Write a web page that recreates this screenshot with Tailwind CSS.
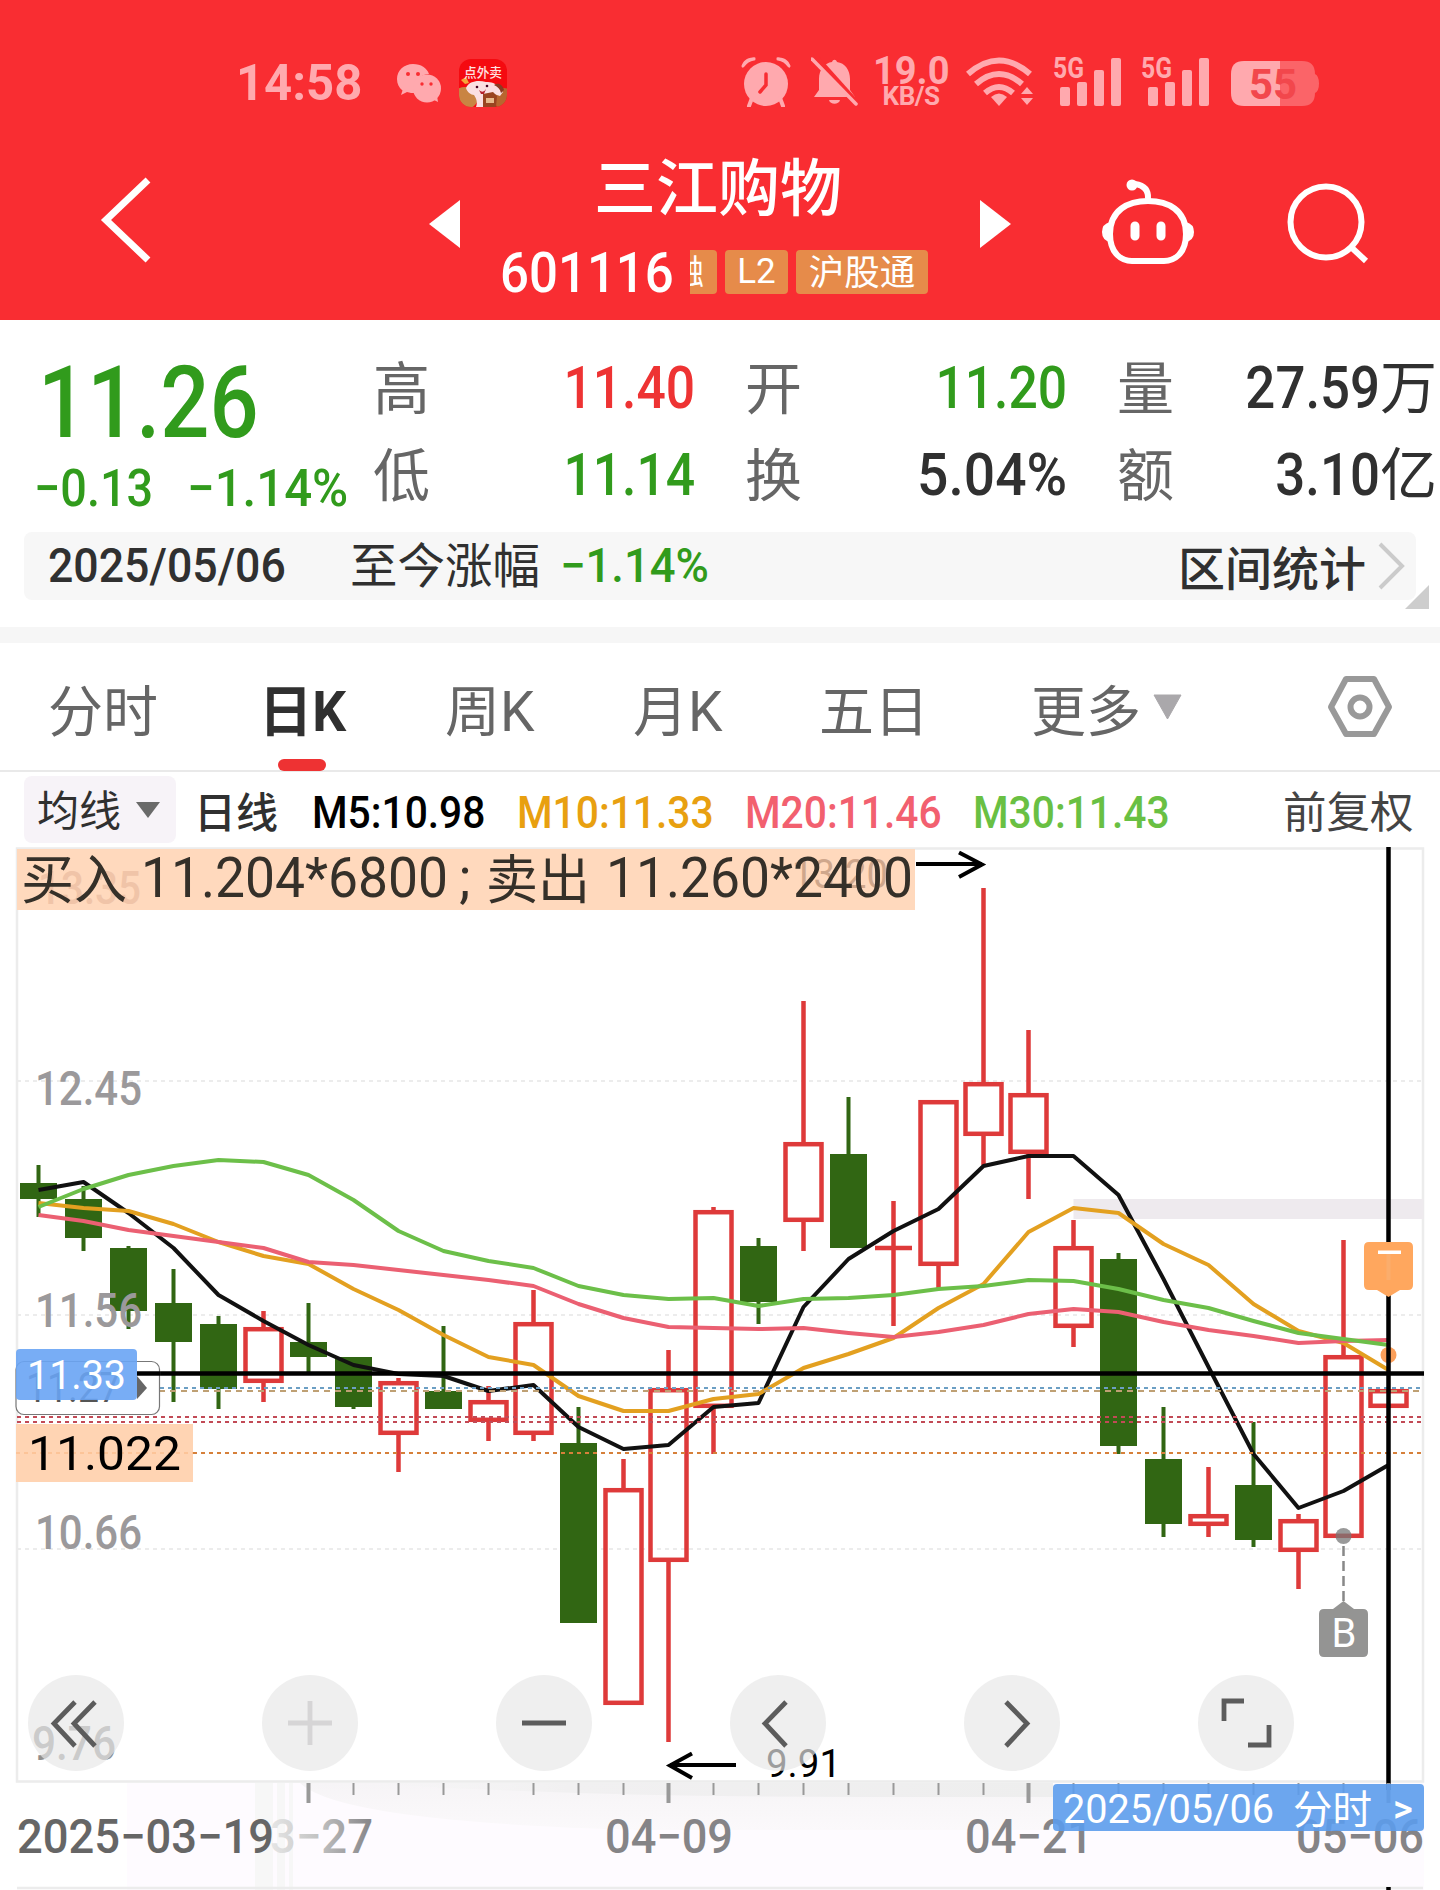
<!DOCTYPE html>
<html lang="zh-CN">
<head>
<meta charset="utf-8">
<title>三江购物 601116</title>
<script src="https://cdn.jsdelivr.net/npm/@tailwindcss/browser@4"></script>
</head>
<body class="w-[1440px] h-[1890px] overflow-hidden bg-white font-['Roboto','Noto_Sans_CJK_SC',sans-serif] text-[#303030]">

<!-- Header -->
<header class="h-[320px] bg-[#f92d32] text-white">
  <!-- System status bar -->
  <div class="flex h-[130px] items-start pt-[57px] text-[#ffa9ae]">
    <div class="ml-[236px] w-[161px] h-[50px] leading-[53px] text-[50px] font-bold whitespace-nowrap"><span class="inline-block origin-left scale-x-[0.98]">14:58</span></div>
    <svg class="w-[46px] h-[50px]" viewBox="397 57 46 50">
      <path fill="currentColor" d="M413 64c-9 0-16 6.500-16 15 0 5 2 8.500 5.500 11.500L401 95l6-3c3 1 5 1 8 1-1-13 6-19 14-19-2-6-8-10-16-10z"/>
      <circle cx="427" cy="88.500" r="14" fill="currentColor"/><path fill="currentColor" d="M432 99l6 3-1-6z"/>
      <g fill="#f92d32"><circle cx="408" cy="74" r="2"/><circle cx="418" cy="74" r="2"/><circle cx="422" cy="84" r="1.700"/><circle cx="431" cy="84" r="1.700"/></g>
    </svg>
    <svg class="ml-[16px] w-[48px] h-[50px]" viewBox="0 0 48 50">
      <defs><clipPath id="app"><rect y="2" width="48" height="48" rx="12"/></clipPath></defs>
      <g clip-path="url(#app)">
        <rect width="48" height="50" fill="#f50a10"/>
        <ellipse cx="6" cy="41" rx="13" ry="11" fill="#c98443"/><ellipse cx="45" cy="42" rx="10" ry="11" fill="#b8662f"/>
        <path d="M2 23l5-3 3 6-4 1z" fill="#f6a53a"/>
        <path d="M7 31c3-7 12-8 20-6 5 0 10 1 12 5l5 5-3 4-6-2c1 4-1 7-3 13H17c2-5 0-9-2-12-3 0-7-3-8-7z" fill="#fbdfe2"/>
        <path d="M35 28c4-3 9 0 10 5l-3 3c-1-4-3-6-7-8z" fill="#8a3a22"/>
        <circle cx="18" cy="30" r="1.300" fill="#402"/><circle cx="28" cy="29" r="1.300" fill="#402"/><path d="M20 33q4 4 7-1l-2 5h-3z" fill="#b5202a"/>
        <path d="M24 37l10-2 4 4-1 11H24z" fill="#9a4420"/><rect x="27" y="41" width="8" height="5" fill="#e7b98b"/>
        <text x="5" y="20" font-size="13" font-weight="500" fill="#ffe3e3" textLength="38" lengthAdjust="spacingAndGlyphs" font-family="Noto Sans CJK SC">点外卖</text>
      </g>
    </svg>
    <svg class="ml-[234px] w-[50px] h-[50px]" viewBox="0 0 50 50" fill="currentColor">
      <circle cx="25" cy="27" r="22"/><path d="M1 11C0 4 8-1 15 1 9 3 4 6 1 11zM49 11C50 4 42-1 35 1c6 2 11 5 14 10z"/><path d="M2 9Q6 3 13 2M48 9Q44 3 37 2" fill="none" stroke="currentColor" stroke-width="3" stroke-linecap="round"/>
      <path d="M11 41l-3 8M39 41l3 8" stroke="currentColor" stroke-width="4" stroke-linecap="round"/>
      <path d="M25 17v11l-6 7" stroke="#f92d32" stroke-width="3.500" stroke-linecap="round" fill="none"/>
    </svg>
    <svg class="ml-[20px] w-[48px] h-[50px]" viewBox="0 0 48 50" fill="currentColor">
      <path d="M3 40l5-7V22C8 12 14 6 21 5c1-3 4-3 5 0 8 1 13 8 13 17v11l5 7z"/><path d="M18 43h11c-1 5-10 5-11 0z"/>
      <path d="M5 0L49 49" stroke="#f92d32" stroke-width="5"/><path d="M1 2l44 45" stroke="currentColor" stroke-width="3.500" stroke-linecap="round"/>
    </svg>
    <div class="ml-[14px] w-[76px] text-center font-bold">
      <div class="h-[27px] text-[38px] leading-[28px]">19.0</div>
      <div class="text-[26px] leading-[24px] tracking-[-0.5px]">KB/S</div>
    </div>
    <svg class="ml-[16px] w-[70px] h-[50px]" viewBox="965 57 70 50" fill="none" stroke="currentColor" stroke-width="6">
      <path d="M968 74q31-27 62 0M976 84q23-20 46 0M985 93q14-12 28 0"/>
      <path d="M999 106l-8-9q8-7 16 0z" fill="currentColor" stroke="none"/>
      <path d="M1027 87l6 7h-12zM1027 105l6-7h-12z" fill="currentColor" stroke="none"/>
    </svg>
    <svg class="ml-[18px] w-[70px] h-[50px] overflow-visible" viewBox="1053 57 70 50" fill="currentColor">
      <text x="1053" y="78" font-size="29" font-weight="700" textLength="31" lengthAdjust="spacingAndGlyphs">5G</text>
      <rect x="1060" y="87" width="10" height="19" rx="2"/><rect x="1077" y="82" width="10" height="24" rx="2"/><rect x="1094" y="70" width="10" height="36" rx="2"/><rect x="1111" y="58" width="10" height="48" rx="2"/>
    </svg>
    <svg class="ml-[18px] w-[70px] h-[50px] overflow-visible" viewBox="1053 57 70 50" fill="currentColor">
      <text x="1053" y="78" font-size="29" font-weight="700" textLength="31" lengthAdjust="spacingAndGlyphs">5G</text>
      <rect x="1060" y="87" width="10" height="19" rx="2"/><rect x="1077" y="82" width="10" height="24" rx="2"/><rect x="1094" y="70" width="10" height="36" rx="2"/><rect x="1111" y="58" width="10" height="48" rx="2"/>
    </svg>
    <svg class="ml-[20px] w-[90px] h-[50px]" viewBox="1231 57 90 50">
      <path d="M1280 61h22q13 0 13 13 4 2 4 9.500t-4 9.500q0 13-13 13h-22z" fill="#fb6468"/>
      <path d="M1280 61h-36q-13 0-13 13v19q0 13 13 13h36z" fill="currentColor"/>
      <text x="1249" y="99" font-size="42" font-weight="700" fill="#f2474c" textLength="48" lengthAdjust="spacingAndGlyphs">55</text>
    </svg>
  </div>
  <!-- Navigation -->
  <div class="flex h-[190px] items-start">
    <svg class="ml-[96px] mt-[40px] w-[60px] h-[100px]" viewBox="96 170 60 100" fill="none" stroke="white" stroke-width="7"><path d="M148 180l-42 40 42 40"/></svg>
    <svg class="ml-[273px] mt-[68px] w-[32px] h-[52px]" viewBox="0 0 32 52" fill="white"><path d="M0 26L31 2v48z"/></svg>
    <div class="ml-[34px] w-[445px]">
      <div class="mt-[20px] ml-[99px] h-[76px] leading-[79px] text-[62px] font-medium whitespace-nowrap">三江购物</div>
      <div class="flex h-[50px] items-center mt-[21px]">
        <div class="w-[195px] pl-[5px] pt-[2px] text-[56px] leading-[50px] font-medium whitespace-nowrap"><span class="inline-block origin-left scale-x-[0.91]">601116</span></div>
        <div class="flex h-[44px] w-[27px] justify-end overflow-hidden rounded-r-[4px] bg-[#e68b4a] pr-[13px] text-[34px] leading-[44px]"><span>融</span></div>
        <div class="ml-[8px] h-[44px] w-[63px] rounded-[4px] bg-[#e68b4a] text-center text-[35px] leading-[44px]">L2</div>
        <div class="ml-[8px] h-[44px] w-[132px] rounded-[4px] bg-[#e68b4a] text-center text-[35.500px] leading-[47px]">沪股通</div>
      </div>
    </div>
    <svg class="ml-[40px] mt-[68px] w-[32px] h-[52px]" viewBox="0 0 32 52" fill="white"><path d="M31 26L0 2v48z"/></svg>
    <svg class="ml-[86px] mt-[46px] w-[100px] h-[92px]" viewBox="1098 176 100 92" fill="none" stroke="white" stroke-width="6">
      <path d="M1148 201c20 0 38 9 38 33 0 20-12 27-22 27h-32c-10 0-22-7-22-27 0-24 18-33 38-33z"/>
      <path d="M1148 199q1-13-13-15"/><circle cx="1132" cy="185" r="5.500" fill="white" stroke="none"/>
      <path d="M1110 222q-8 2-8 10t8 10zM1186 222q8 2 8 10t-8 10z" fill="white" stroke="none"/>
      <path d="M1135 226v10M1161 226v10" stroke-width="9" stroke-linecap="round"/>
    </svg>
    <svg class="ml-[84px] mt-[48px] w-[92px] h-[92px]" viewBox="1282 178 92 92" fill="none" stroke="white" stroke-width="6"><circle cx="1326" cy="222" r="35.500"/><path d="M1351 247l15 14"/></svg>
  </div>
</header>

<!-- Quote summary -->
<section class="h-[307px]">
  <div class="flex h-[212px] whitespace-nowrap">
    <div class="w-[373px] pt-[20px] text-[#319b1c]">
      <div class="h-[120px] pl-[38px] text-[100px] leading-[125px] font-medium"><span class="inline-block origin-left scale-x-[0.865]">11.26</span></div>
      <div class="flex h-[54px] text-[52px] leading-[57px] font-medium">
        <div class="ml-[34px] w-[153px]"><span class="inline-block origin-left scale-x-[0.9]">−0.13</span></div>
        <div><span class="inline-block origin-left scale-x-[0.945]">−1.14%</span></div>
      </div>
    </div>
    <div class="grid grid-cols-[322px_322px_320px] grid-rows-[87px_87px] gap-x-[50px] pt-[24px] text-[60px] leading-[87px] font-medium">
      <div class="flex justify-between"><span class="pt-[2px] text-[57px] font-normal text-[#666]">高</span><span class="origin-right scale-x-[0.86] text-[#e33]">11.40</span></div>
      <div class="flex justify-between"><span class="pt-[2px] text-[57px] font-normal text-[#666]">开</span><span class="origin-right scale-x-[0.86] text-[#319b1c]">11.20</span></div>
      <div class="flex justify-between"><span class="pt-[2px] text-[57px] font-normal text-[#666]">量</span><span class="flex"><span class="origin-right scale-x-[0.88]">27.59</span><span class="pt-px text-[57px] font-normal">万</span></span></div>
      <div class="flex justify-between"><span class="pt-[2px] text-[57px] font-normal text-[#666]">低</span><span class="origin-right scale-x-[0.86] text-[#319b1c]">11.14</span></div>
      <div class="flex justify-between"><span class="pt-[2px] text-[57px] font-normal text-[#666]">换</span><span class="origin-right scale-x-[0.92]">5.04%</span></div>
      <div class="flex justify-between"><span class="pt-[2px] text-[57px] font-normal text-[#666]">额</span><span class="flex"><span class="origin-right scale-x-[0.88]">3.10</span><span class="pt-px text-[57px] font-normal">亿</span></span></div>
    </div>
  </div>
  <div class="relative mx-[24px] flex h-[68px] items-center rounded-[8px] bg-[#f7f7f7] text-[48px] leading-[68px] whitespace-nowrap">
    <div class="ml-[24px] w-[302px] font-medium"><span class="inline-block origin-left scale-x-[0.93]">2025/05/06</span></div>
    <div class="w-[210px] pt-[2px] text-[47.500px]">至今涨幅</div>
    <div class="font-medium text-[#319b1c]"><span class="inline-block origin-left scale-x-[0.945]">−1.14%</span></div>
    <div class="mr-[12px] ml-auto pt-[8px] text-[47px] font-medium">区间统计</div>
    <svg class="mr-[10px] h-[50px] w-[28px]" viewBox="0 0 28 50" fill="none" stroke="#cbcbcb" stroke-width="4"><path d="M2 3l22 22L2 47"/></svg>
    <svg class="absolute top-[53px] left-[1381px] h-[24px] w-[24px]" viewBox="0 0 24 24"><path d="M24 0v24H0z" fill="#cdcdcd"/></svg>
  </div>
</section>
<div class="h-[16px] bg-[#f6f6f6]"></div>

<!-- Period tabs -->
<nav class="flex h-[129px] border-b-2 border-[#e9e9e9] text-[55px] leading-[138px] text-[#666] whitespace-nowrap">
  <div class="ml-[48px] w-[211px]">分时</div>
  <div class="relative w-[186px] font-bold text-[#303030]"><span class="inline-block origin-left scale-x-[0.97]">日K</span><span class="absolute top-[116px] left-[19px] h-[12px] w-[48px] rounded-full bg-[#ee3233]"></span></div>
  <div class="w-[188px]">周K</div>
  <div class="w-[186px]">月K</div>
  <div class="w-[212px]">五日</div>
  <div class="w-[122px]">更多</div>
  <svg class="mt-[51px] h-[26px] w-[29px]" viewBox="0 0 29 26"><path d="M1 1h27L14.500 25z" fill="#aaa8ab" stroke="#aaa8ab" stroke-linejoin="round"/></svg>
  <svg class="mt-[31px] ml-[144px] h-[66px] w-[68px]" viewBox="1326 674 68 66" fill="none" stroke="#999" stroke-width="6" stroke-linejoin="round"><path d="M1346 679h28l15 28-15 27h-28l-15-27z"/><circle cx="1360" cy="707" r="9.500"/></svg>
</nav>

<!-- Moving averages -->
<div class="flex h-[72px] items-start pt-[4px] text-[42px] leading-[73px] whitespace-nowrap">
  <div class="ml-[24px] flex h-[67px] w-[152px] items-center rounded-[8px] bg-[#f7f3f8] pt-[3px] pl-[13px]">均线<svg class="mb-[3px] ml-[14px] h-[18px] w-[26px]" viewBox="0 0 26 18"><path d="M1 1h24L13 17z" fill="#6a6a6a"/></svg></div>
  <div class="ml-[18px] w-[118px] pt-px font-medium">日线</div>
  <div class="w-[205px] text-[45px] font-medium text-black"><span class="inline-block origin-left scale-x-[0.905]">M5:10.98</span></div>
  <div class="w-[228px] text-[45px] font-medium text-[#e8a010]"><span class="inline-block origin-left scale-x-[0.905]">M10:11.33</span></div>
  <div class="w-[228px] text-[45px] font-medium text-[#f2606f]"><span class="inline-block origin-left scale-x-[0.905]">M20:11.46</span></div>
  <div class="w-[310px] text-[45px] font-medium text-[#69c043]"><span class="inline-block origin-left scale-x-[0.905]">M30:11.43</span></div>
  <div class="pt-px text-[43.500px] text-[#444]">前复权</div>
</div>

<!-- Candlestick chart -->
<svg id="chart" class="block h-[1046px] w-[1440px]" viewBox="0 844 1440 1046" font-family="Roboto, 'Noto Sans CJK SC', sans-serif">
  <defs>
    <linearGradient id="shade" x1="0" x2="1"><stop offset="0" stop-color="#f4f4f4" stop-opacity="0"/><stop offset="0.300" stop-color="#f1f0f1"/><stop offset="1" stop-color="#eee"/></linearGradient>
    <linearGradient id="band" x1="0" x2="0" y1="0" y2="1"><stop offset="0" stop-color="#f6f4f6"/><stop offset="1" stop-color="#fbf9fb"/></linearGradient>
    <linearGradient id="fade" x1="0" x2="1"><stop offset="0" stop-color="#e6e6e6"/><stop offset="0.450" stop-color="#c4c4c4"/><stop offset="1" stop-color="#858487"/></linearGradient>
  </defs>
  <rect x="127" y="1783" width="1297" height="107" fill="#fefbff"/>
  <path d="M255 1783h18v107h-18zM277 1783h8v107h-8zM289 1783h4v107h-4z" fill="#f7f7f7"/>
  <path d="M300 1783H1053v47H640Q340 1822 300 1783z" fill="url(#band)"/>
  <path d="M360 1783H1053v14H900Q600 1798 360 1783z" fill="url(#shade)"/>
  <g fill="none" stroke="#ececec" stroke-width="2.500"><path d="M17 848.500H1423V1781.500H17zM17 1888H1423"/></g>
  <g stroke="#ececec" stroke-width="2" stroke-dasharray="4 4"><path d="M17 1081H1423M17 1315H1423M17 1549H1423"/></g>
  <rect x="1073.500" y="1199" width="350" height="20" fill="#eeeaee"/>
  <g id="candles"></g>
  <g id="averages" fill="none" stroke-width="4" stroke-linejoin="round"></g>
  <g fill="none" stroke-width="2">
    <path d="M160 1388H1423" stroke="#6c9fc4" stroke-dasharray="4 4"/>
    <path d="M148 1391H1423" stroke="#bfa074" stroke-dasharray="6 5"/>
    <path d="M17 1417H1423M17 1422H1423" stroke="#c24a56" stroke-dasharray="4 4"/>
    <path d="M17 1453H1423" stroke="#d6803a" stroke-dasharray="4 4"/>
  </g>
  <!-- Price axis -->
  <g font-size="48" font-weight="500" fill="#9b999b">
    <text x="35" y="1105" textLength="107" lengthAdjust="spacingAndGlyphs">12.45</text>
    <text x="35" y="1327" textLength="107" lengthAdjust="spacingAndGlyphs">11.56</text>
    <text x="35" y="1549" textLength="107" lengthAdjust="spacingAndGlyphs">10.66</text>
    <text x="32" y="1760" textLength="84" lengthAdjust="spacingAndGlyphs" fill="#8f8f8f">9.76</text>
  </g>
  <!-- Order note -->
  <rect x="17" y="849" width="898" height="61" fill="#ffd9bd"/>
  <text x="38" y="904" font-size="46" font-weight="500" fill="#f0c4a8" textLength="103" lengthAdjust="spacingAndGlyphs">13.35</text>
  <text x="792" y="888" font-size="40" fill="#cfa78c" textLength="96" lengthAdjust="spacingAndGlyphs">13.20</text>
  <g font-size="55" fill="#353029">
    <text x="21" y="899" font-size="53" textLength="106" lengthAdjust="spacingAndGlyphs">买入</text>
    <text x="141" y="897" textLength="307" lengthAdjust="spacingAndGlyphs">11.204*6800</text>
    <text x="459" y="897">;</text>
    <text x="486" y="899" font-size="53" textLength="104" lengthAdjust="spacingAndGlyphs">卖出</text>
    <text x="606" y="897" textLength="307" lengthAdjust="spacingAndGlyphs">11.260*2400</text>
  </g>
  <g fill="none" stroke="#000" stroke-width="4">
    <path d="M916 864H982M959 852.500L982 864.500L959 877"/>
    <path d="M736 1765H670M692 1753.500L670 1765.500L692 1778"/>
  </g>
  <text x="766" y="1777" font-size="38" fill="#000" textLength="75" lengthAdjust="spacingAndGlyphs">9.91</text>
  <!-- Sell marker dot -->
  <circle cx="1388.500" cy="1355" r="8" fill="#fb9f5a"/>
  <!-- Crosshair -->
  <path d="M17 1373.500H1424M1388.500 847V1790M1388.500 1887V1890" stroke="#000" stroke-width="4.500"/>
  <path d="M1369 1242h39q5 0 5 5v38q0 5-5 5h-8l-11.500 7-11.500-7h-8q-5 0-5-5v-38q0-5 5-5z" fill="#ffa75e"/>
  <rect x="1386.500" y="1254" width="4" height="26" fill="#fbad6c"/><rect x="1378" y="1250.500" width="23" height="3.500" fill="#fff"/>
  <!-- Buy marker -->
  <circle cx="1343.500" cy="1536" r="8" fill="#777" fill-opacity="0.750"/>
  <path d="M1343.500 1546V1602" stroke="#888" stroke-width="2.500" stroke-dasharray="10 5"/>
  <path d="M1324 1609h9l10.500-8 10.500 8h9q5 0 5 5v38q0 5-5 5h-39q-5 0-5-5v-38q0-5 5-5z" fill="#949493"/>
  <text x="1344" y="1647" font-size="40" fill="#fff" text-anchor="middle">B</text>
  <!-- Price flags -->
  <rect x="16" y="1361.500" width="143.500" height="53" rx="8" fill="#fff" stroke="#777" stroke-width="1.200"/>
  <text x="26" y="1402" font-size="42" fill="#555" textLength="94" lengthAdjust="spacingAndGlyphs">11.27</text>
  <path d="M137 1373.500H160" stroke="#000" stroke-width="4.500"/>
  <path d="M137 1376l10 12-10 11z" fill="#666"/>
  <rect x="16" y="1349" width="121" height="51" rx="4" fill="#69a4f4" fill-opacity="0.900"/>
  <text x="27" y="1389" font-size="41" fill="#fff" textLength="99" lengthAdjust="spacingAndGlyphs">11.33</text>
  <rect x="16" y="1424" width="177" height="58" fill="#ffd4b3"/>
  <path d="M16 1453H193" stroke="#fcc498" stroke-width="2" stroke-dasharray="4 4"/>
  <text x="28" y="1470" font-size="49" fill="#000" textLength="153" lengthAdjust="spacingAndGlyphs">11.022</text>
  <!-- Time axis -->
  <g id="ticks" stroke="#999"></g>
  <g font-size="48" font-weight="500" fill="#858487">
    <text x="270" y="1853" textLength="103" fill="url(#fade)" lengthAdjust="spacingAndGlyphs">3−27</text>
    <text x="17" y="1853" textLength="257" fill="#666" lengthAdjust="spacingAndGlyphs">2025−03−19</text>
    <text x="605" y="1853" textLength="128" lengthAdjust="spacingAndGlyphs">04−09</text>
    <text x="965" y="1853" textLength="128" lengthAdjust="spacingAndGlyphs">04−21</text>
    <text x="1296" y="1853" textLength="128" lengthAdjust="spacingAndGlyphs">05−06</text>
  </g>
  <rect x="1053" y="1784" width="371" height="47" rx="4" fill="#5c9cec" fill-opacity="0.900"/>
  <g font-size="40" fill="#fff">
    <text x="1063" y="1823" textLength="211" lengthAdjust="spacingAndGlyphs">2025/05/06</text>
    <text x="1293" y="1824" textLength="79" lengthAdjust="spacingAndGlyphs">分时</text>
    <text x="1393" y="1822" font-size="38" font-weight="500">&gt;</text>
  </g>
  <!-- Chart controls -->
  <g fill="#e7e7e7" fill-opacity="0.680">
    <circle cx="76" cy="1723" r="48"/><circle cx="310" cy="1723" r="48"/><circle cx="544" cy="1723" r="48"/>
    <circle cx="778" cy="1723" r="48"/><circle cx="1012" cy="1723" r="48"/><circle cx="1246" cy="1723" r="48"/>
  </g>
  <g fill="none" stroke="#5c5c5c" stroke-width="4.800">
    <path d="M75 1702L54 1723.500L75 1746M95 1702L74 1723.500L95 1746M522 1723H566"/>
    <path d="M786 1702L765 1723.500L786 1746M1006 1702L1027 1723.500L1006 1746"/>
    <path d="M1224 1721V1701H1244M1248 1745H1269V1725"/>
    <path d="M288 1723H332M310 1701V1745" stroke="#d6d5d6"/>
  </g>
</svg>

<script>
  // Each candle: direction (1 up, 0 down), high, low, body top, body bottom, in chart units.
  const candles = [
    [0,1165,1217,1183,1199],[0,1186,1251,1199,1238],[0,1246,1329,1248,1311],[0,1269,1402,1303,1342],
    [0,1316,1409,1324,1389],[1,1311,1402,1327,1383],[0,1303,1375,1342,1357],[0,1357,1409,1357,1407],
    [1,1378,1472,1381,1435],[0,1326,1409,1391,1409],[1,1386,1441,1400,1422],[1,1290,1441,1322,1435],
    [0,1407,1623,1443,1623],[1,1459,1705,1488,1705],[1,1350,1742,1388,1562],[1,1207,1454,1210,1408],
    [0,1238,1324,1246,1302],[1,1001,1251,1142,1222],[0,1097,1248,1154,1248],[1,1201,1326,1246,1250],
    [1,1100,1288,1100,1266],[1,888,1165,1082,1136],[1,1030,1199,1093,1154],[1,1220,1347,1246,1328],
    [0,1253,1454,1259,1446],[0,1407,1537,1459,1524],[1,1467,1537,1514,1526],[0,1422,1547,1485,1540],
    [1,1514,1589,1519,1552],[1,1240,1538,1355,1538],[1,1389,1408,1389,1408]
  ];
  const averages = {
    '#111111': [1190,1182,1213,1248,1295,1321,1345,1365,1374,1376,1391,1385,1427,1449,1445,1407,1403,1307,1259,1231,1209,1166,1156,1156,1195,1279,1367,1454,1508,1491,1465],
    '#e3a020': [1203,1208,1211,1224,1242,1256,1264,1289,1310,1335,1357,1365,1396,1411,1411,1399,1394,1368,1354,1338,1308,1284,1232,1208,1213,1244,1265,1304,1331,1343,1370],
    '#eb6072': [1215,1221,1230,1236,1242,1248,1262,1265,1270,1275,1280,1286,1304,1318,1327,1328,1329,1328,1333,1337,1332,1325,1314,1309,1312,1322,1330,1336,1343,1341,1340],
    '#6cbf49': [1207,1189,1175,1166,1160,1162,1175,1200,1231,1251,1261,1268,1286,1295,1299,1298,1306,1299,1298,1295,1289,1286,1280,1281,1289,1300,1308,1321,1333,1339,1345]
  };
  const x = i => 38.5 + 45 * i;
  document.getElementById('candles').innerHTML = candles.map(([up, hi, lo, top, bottom], i) => {
    const c = x(i);
    if (!up) return `<path d="M${c} ${hi}V${lo}" stroke="#316613" stroke-width="4"/><rect x="${c - 18.5}" y="${top}" width="37" height="${bottom - top}" fill="#316613"/>`;
    if (bottom - top < 6) return `<path d="M${c} ${hi}V${lo}M${c - 18.5} ${top + 2}h37" stroke="#de3a3a" stroke-width="4.500"/>`;
    return `<path d="M${c} ${hi}V${top + 2}M${c} ${bottom - 2}V${lo}" stroke="#de3a3a" stroke-width="4.500"/><rect x="${c - 18}" y="${top + 2.2}" width="36" height="${bottom - top - 4.4}" fill="none" stroke="#de3a3a" stroke-width="4.500"/>`;
  }).join('');
  document.getElementById('averages').innerHTML = Object.entries(averages).map(([color, ys]) =>
    `<polyline stroke="${color}" points="${ys.map((y, i) => x(i) + ',' + y).join(' ')}"/>`).join('');
  document.getElementById('ticks').innerHTML = Array.from({ length: 25 }, (_, k) =>
    `<path d="M${308.5 + 45 * k} 1783V${k % 8 ? 1795 : 1803}" stroke-width="${k % 8 ? 2 : 4}"/>`).join('');
</script>
</body>
</html>
